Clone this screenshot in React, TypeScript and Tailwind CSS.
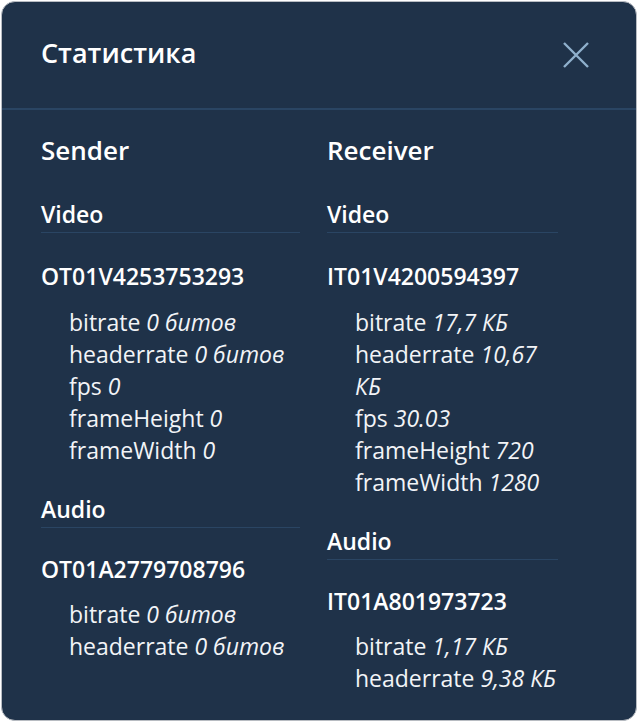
import React from 'react';

type Stat = { label: string; value: string };
type Track = { id: string; stats: Stat[] };
type Side = { title: string; video: Track; audio: Track; width: string };

const sides: Side[] = [
  {
    title: 'Sender',
    width: 'w-[259px]',
    video: {
      id: 'OT01V4253753293',
      stats: [
        { label: 'bitrate', value: '0 битов' },
        { label: 'headerrate', value: '0 битов' },
        { label: 'fps', value: '0' },
        { label: 'frameHeight', value: '0' },
        { label: 'frameWidth', value: '0' },
      ],
    },
    audio: {
      id: 'OT01A2779708796',
      stats: [
        { label: 'bitrate', value: '0 битов' },
        { label: 'headerrate', value: '0 битов' },
      ],
    },
  },
  {
    title: 'Receiver',
    width: 'w-[231px]',
    video: {
      id: 'IT01V4200594397',
      stats: [
        { label: 'bitrate', value: '17,7 КБ' },
        { label: 'headerrate', value: '10,67 КБ' },
        { label: 'fps', value: '30.03' },
        { label: 'frameHeight', value: '720' },
        { label: 'frameWidth', value: '1280' },
      ],
    },
    audio: {
      id: 'IT01A801973723',
      stats: [
        { label: 'bitrate', value: '1,17 КБ' },
        { label: 'headerrate', value: '9,38 КБ' },
      ],
    },
  },
];

const Section: React.FC<{ name: string; track: Track; first?: boolean }> = ({ name, track, first }) => (
  <div className={first ? 'mt-8' : 'mt-[29px]'}>
    <h3 className="text-[23px] leading-[28px] font-semibold pb-1 border-b border-[#2a4563]">{name}</h3>
    <div className={`${first ? 'mt-[29px]' : 'mt-[27px]'} text-[23px] leading-[28px] font-semibold`}>{track.id}</div>
    <ul className={`${first ? 'mt-4' : 'mt-[15px]'} pl-7 text-[23px] leading-[32px] text-[#f2f4f7]`}>
      {track.stats.map((s) => (
        <li key={s.label}>
          {s.label} <i>{s.value}</i>
        </li>
      ))}
    </ul>
  </div>
);

export default function App() {
  return (
    <div className="bg-white p-px" style={{ fontFamily: '"Open Sans", "Noto Sans", sans-serif' }}>
      <div className="w-[636px] h-[720px] rounded-[14px] border border-[#b8bcc2] bg-[#1f3249] text-white overflow-hidden">
        {/* Header */}
        <div className="h-[108px] flex items-center justify-between pl-[39px] pr-[46px] border-b-2 border-[#2a4563]">
          <h2 className="text-[27px] font-semibold pb-1">Статистика</h2>
          <button className="w-[28px] h-[28px] flex items-center justify-center text-[#8fb0cc]" aria-label="close">
            <svg width="28" height="28" viewBox="0 0 28 28" fill="none" stroke="currentColor" strokeWidth="2.4">
              <path d="M2 2 L26 26 M26 2 L2 26" />
            </svg>
          </button>
        </div>

        {/* Columns */}
        <div className="flex gap-[27px] pl-[39px] pt-[22px]">
          {sides.map((side) => (
            <div key={side.title} className={side.width}>
              <h2 className="text-[26px] leading-[36px] font-semibold">{side.title}</h2>
              <Section name="Video" track={side.video} first />
              <Section name="Audio" track={side.audio} />
            </div>
          ))}
        </div>
      </div>
    </div>
  );
}
